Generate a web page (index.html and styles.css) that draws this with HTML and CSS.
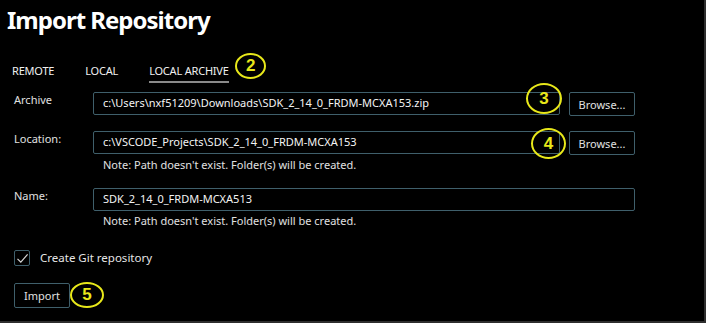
FILE: index.html
```html
<!DOCTYPE html>
<html lang="en">
<head>
    <meta charset="UTF-8">
    <title>Import Repository</title>
    <link rel="stylesheet" href="styles.css">
</head>
<body>
    <div class="window">
        <h1 class="title">Import Repository</h1>

        <div class="tabs">
            <span class="tab">REMOTE</span>
            <span class="tab">LOCAL</span>
            <span class="tab active">LOCAL ARCHIVE<span class="marker marker-2">2</span></span>
        </div>

        <div class="form">
            <div class="row">
                <label class="label">Archive</label>
                <div class="field">
                    <div class="line">
                        <div class="input short">c:\Users\nxf51209\Downloads\SDK_2_14_0_FRDM-MCXA153.zip<span class="marker marker-3">3</span></div>
                        <button class="btn">Browse...</button>
                    </div>
                </div>
            </div>

            <div class="row">
                <label class="label">Location:</label>
                <div class="field">
                    <div class="line">
                        <div class="input short">c:\VSCODE_Projects\SDK_2_14_0_FRDM-MCXA153<span class="marker marker-4">4</span></div>
                        <button class="btn">Browse...</button>
                    </div>
                    <div class="note">Note: Path doesn't exist. Folder(s) will be created.</div>
                </div>
            </div>

            <div class="row">
                <label class="label">Name:</label>
                <div class="field">
                    <div class="input">SDK_2_14_0_FRDM-MCXA513</div>
                    <div class="note">Note: Path doesn't exist. Folder(s) will be created.</div>
                </div>
            </div>

            <div class="check">
                <span class="box">
                    <svg width="13" height="13" viewBox="0 0 13 13"><path d="M1.5 6.8 L4.8 10.2 L11.6 2.4" fill="none" stroke="#d8d8d8" stroke-width="1.2"/></svg>
                </span>
                <span class="check-text">Create Git repository</span>
            </div>

            <div class="actions">
                <button class="btn import">Import<span class="marker marker-5">5</span></button>
            </div>
        </div>
    </div>
</body>
</html>
```

FILE: styles.css
```css
html, body {
    margin: 0;
    padding: 0;
    background-color: #000;
}
body {
    font-family: 'Segoe UI', 'Noto Sans', 'Open Sans', sans-serif;
    color: #e6e6e6;
    font-size: 11px;
}
.window {
    width: 704px;
    height: 321px;
    border-right: 2px solid #2e2e2e;
    border-bottom: 2px solid #2e2e2e;
    background-color: #000;
    overflow: hidden;
}
.title {
    margin: 0;
    padding: 4px 0 0 7px;
    font-size: 24px;
    line-height: 32px;
    font-weight: 700;
    color: #fff;
    letter-spacing: -1px;
}
.tabs {
    display: flex;
    gap: 31px;
    padding: 28px 0 0 12px;
}
.tab {
    position: relative;
    font-size: 11px;
    line-height: 14px;
    color: #f0f0f0;
    padding-bottom: 3px;
    letter-spacing: -0.2px;
}
.tab.active {
    border-bottom: 2px solid #8a8a8a;
}
.marker {
    position: absolute;
    box-sizing: border-box;
    border: 2px solid #e8e81a;
    border-radius: 50%;
    color: #e8e81a;
    font-family: 'Liberation Sans', Arial, sans-serif;
    font-weight: 700;
    font-size: 17px;
    display: flex;
    align-items: center;
    justify-content: center;
    pointer-events: none;
}
.marker-2 {
    width: 31px;
    height: 26px;
    left: 86px;
    top: -11px;
}
.marker-3 {
    width: 36px;
    height: 31px;
    right: -3px;
    top: -10px;
}
.marker-4 {
    width: 35px;
    height: 31px;
    right: -7px;
    top: -4px;
}
.marker-5 {
    width: 34px;
    height: 26px;
    left: 55px;
    top: -2px;
}
.form {
    display: flex;
    flex-direction: column;
    padding: 9px 0 0 14px;
}
.row {
    display: flex;
    margin-bottom: 15px;
}
.label {
    width: 79px;
    line-height: 16px;
    color: #e0e0e0;
}
.field {
    display: flex;
    flex-direction: column;
    width: 542px;
}
.line {
    display: flex;
    gap: 9px;
}
.input {
    position: relative;
    box-sizing: border-box;
    height: 23px;
    border: 1.5px solid #3f5f6b;
    border-radius: 2px;
    padding: 0 9px;
    line-height: 20px;
    color: #f4f4f4;
    white-space: nowrap;
}
.input.short {
    flex: 1;
}
.btn {
    position: relative;
    box-sizing: border-box;
    height: 24px;
    width: 66px;
    padding: 0;
    background: #000;
    border: 1.5px solid #3f5f6b;
    border-radius: 2px;
    color: #e0e0e0;
    font-family: inherit;
    font-size: 11px;
}
.note {
    margin-top: 2px;
    padding-left: 10px;
    line-height: 16px;
    color: #e0e0e0;
}
.check {
    display: flex;
    align-items: center;
    gap: 10px;
    margin-top: 6px;
}
.box {
    box-sizing: border-box;
    width: 16px;
    height: 16px;
    border: 1.5px solid #3f5f6b;
    border-radius: 2px;
    display: flex;
    align-items: center;
    justify-content: center;
}
.check-text {
    line-height: 16px;
    color: #e6e6e6;
    font-size: 11.5px;
}
.actions {
    margin-top: 17px;
}
.import {
    width: 56px;
    height: 25px;
}
```
